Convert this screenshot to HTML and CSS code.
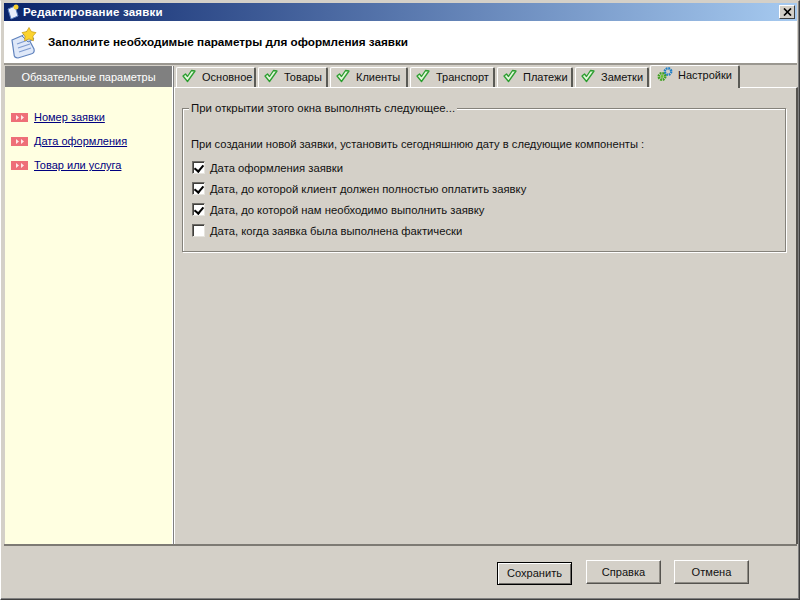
FILE: index.html
```html
<!DOCTYPE html>
<html lang="ru">
<head>
<meta charset="utf-8">
<title>Редактирование заявки</title>
<link rel="stylesheet" href="styles.css">
</head>
<body>
<svg class="defs" width="0" height="0">
  <defs>
    <symbol id="check" viewBox="0 0 14 14">
      <path d="M1 7 L5.500 12.500 L13 2 L9.500 1.500 L5.500 7.500 L3.500 5 Z" fill="#e4f8dc" stroke="#2c9e30" stroke-width="1.300" stroke-linejoin="round"/>
    </symbol>
    <symbol id="arrows" viewBox="0 0 17 9">
      <rect width="17" height="9" fill="#ee6f78"/>
      <path d="M5 2 L8 4.500 L5 7 Z M10 2 L13 4.500 L10 7 Z" fill="#ffe8e8"/>
    </symbol>
  </defs>
</svg>
<div class="window">
  <div class="titlebar">
    <svg class="title-icon" viewBox="0 0 14 16" width="14" height="16">
      <path d="M2 5 L9 2 L12 12 L5 15 Z" fill="#e8eefa" stroke="#5b7fc0"/>
      <circle cx="10" cy="3" r="2.5" fill="#f8d030"/>
    </svg>
    <span class="title-text">Редактирование заявки</span>
    <span class="close-btn">
      <svg viewBox="0 0 9 8" width="9" height="8"><path d="M1 0.5 L8 7.5 M8 0.5 L1 7.5" stroke="#000" stroke-width="1.7"/></svg>
    </span>
  </div>
  <div class="header">
    <svg class="header-icon" viewBox="0 0 30 32" width="30" height="32">
      <path d="M4 13 L18 7 L26 22 Q27 26 23 27 L10 31 Q6 31 6 27 Z" fill="#dfe8f8" stroke="#5f82bd" stroke-width="1.2"/>
      <path d="M9 17 L20 13 M10 21 L22 17 M11 25 L23 21" stroke="#7d9ad0" stroke-width="1.2"/>
      <path d="M14 9 L19 4 L26 12 L20 15 Z" fill="#c4d4ee" stroke="#5f82bd"/>
      <path d="M21 0.5 L23.4 4.6 L28 5.6 L24.9 9.1 L25.4 13.8 L21 11.9 L16.6 13.8 L17.1 9.1 L14 5.6 L18.6 4.6 Z" fill="#fbd32f" stroke="#c89a10" stroke-width=".7"/>
    </svg>
    <span class="header-text">Заполните необходимые параметры для оформления заявки</span>
  </div>
  <div class="main">
    <aside class="side">
      <div class="side-title">Обязательные параметры</div>
      <ul class="side-list">
        <li><svg class="arrows" width="17" height="9"><use href="#arrows"/></svg><a href="#">Номер заявки</a></li>
        <li><svg class="arrows" width="17" height="9"><use href="#arrows"/></svg><a href="#">Дата оформления</a></li>
        <li><svg class="arrows" width="17" height="9"><use href="#arrows"/></svg><a href="#">Товар или услуга</a></li>
      </ul>
    </aside>
    <section class="content">
      <div class="tabs">
        <div class="tab t1"><svg class="check" width="14" height="14"><use href="#check"/></svg>Основное</div>
        <div class="tab t2"><svg class="check" width="14" height="14"><use href="#check"/></svg>Товары</div>
        <div class="tab t3"><svg class="check" width="14" height="14"><use href="#check"/></svg>Клиенты</div>
        <div class="tab t4"><svg class="check" width="14" height="14"><use href="#check"/></svg>Транспорт</div>
        <div class="tab t5"><svg class="check" width="14" height="14"><use href="#check"/></svg>Платежи</div>
        <div class="tab t6"><svg class="check" width="14" height="14"><use href="#check"/></svg>Заметки</div>
        <div class="tab active">
          <svg class="gears" viewBox="0 0 16 15" width="16" height="15">
            <circle cx="11" cy="4.500" r="3.200" fill="none" stroke="#1f7fc8" stroke-width="2.400" stroke-dasharray="1.700 .8"/>
            <circle cx="5" cy="9.500" r="3.200" fill="none" stroke="#3fa020" stroke-width="2.600" stroke-dasharray="1.700 .8"/>
            <circle cx="5" cy="9.500" r="1.400" fill="#66c22e"/>
          </svg>Настройки
        </div>
      </div>
      <div class="pane">
        <div class="group">
          <div class="legend">При открытии этого окна выполнять следующее...</div>
          <p class="group-text">При создании новой заявки, установить сегодняшнюю дату в следующие компоненты :</p>
          <div class="option"><span class="box on"></span>Дата оформления заявки</div>
          <div class="option"><span class="box on"></span>Дата, до которой клиент должен полностью оплатить заявку</div>
          <div class="option"><span class="box on"></span>Дата, до которой нам необходимо выполнить заявку</div>
          <div class="option"><span class="box"></span>Дата, когда заявка была выполнена фактически</div>
        </div>
      </div>
    </section>
  </div>
  <div class="footer">
    <button class="btn default">Сохранить</button>
    <button class="btn">Справка</button>
    <button class="btn">Отмена</button>
  </div>
</div>
</body>
</html>
```
FILE: styles.css
```css
* { box-sizing: border-box; }
html, body { margin: 0; padding: 0; }
body {
  width: 800px;
  height: 600px;
  overflow: hidden;
  font-family: "Liberation Sans", Arial, sans-serif;
  font-size: 11px;
  color: #111;
  background: #d4d0c8;
}
.defs { position: absolute; }
.window {
  width: 800px;
  height: 600px;
  display: flex;
  flex-direction: column;
  padding: 3px 2px 3px 3px;
  background: #d4d0c8;
  border-top: 1px solid #d4d0c8;
  border-left: 1px solid #fff;
  border-right: 1px solid #404040;
  border-bottom: 1px solid #404040;
  box-shadow: inset 0 -1px 0 #808080, inset -1px 0 0 #808080;
}
.titlebar {
  height: 18px;
  margin-top: -1px;
  flex: none;
  display: flex;
  align-items: center;
  padding: 0 2px;
  background: linear-gradient(90deg, #0a246a, #a6caf0);
  color: #fff;
  font-weight: bold;
  font-size: 11.500px;
}
.title-icon { margin-right: 3px; flex: none; }
.title-text { flex: 1; letter-spacing: .2px; }
.close-btn {
  width: 16px;
  height: 14px;
  display: flex;
  align-items: center;
  justify-content: center;
  background: #d4d0c8;
  border: 1px solid;
  border-color: #fff #404040 #404040 #fff;
}
.header {
  height: 42px;
  flex: none;
  display: flex;
  align-items: center;
  background: #fff;
  padding-left: 4px;
  border-bottom: 1px solid #fff;
}
.header-icon { margin-right: 10px; flex: none; margin-top: 2px; }
.header-text { font-weight: bold; color: #000; font-size: 11.730px; }
.main {
  height: 483px;
  flex: none;
  display: flex;
  border-top: 2px solid #9a9790;
  border-bottom: 2px solid #7d7a74;
  box-shadow: 0 1px 0 #e8e6e0;
}
.side {
  width: 168px;
  flex: none;
  margin-left: 1px;
  margin-top: 1px;
  background: #ffffe1;
  border-right: 1px solid #fff;
  box-shadow: 1px 0 0 #808080;
  display: flex;
  flex-direction: column;
}
.side-title {
  height: 21px;
  flex: none;
  display: flex;
  align-items: center;
  justify-content: center;
  background: #808080;
  color: #fff;
  font-size: 11px;
}
.side-list {
  list-style: none;
  margin: 0;
  padding: 18px 0 0 6px;
}
.side-list li {
  height: 24px;
  display: flex;
  align-items: center;
}
.arrows { margin-right: 6px; flex: none; }
.side-list a { color: #000080; text-decoration: underline; }
.content {
  flex: 1;
  margin-left: 1px;
  display: flex;
  flex-direction: column;
  min-width: 0;
}
.tabs {
  height: 22px;
  flex: none;
  display: flex;
  align-items: flex-end;
  padding-left: 2px;
  position: relative;
}
.tab {
  height: 20px;
  display: flex;
  align-items: center;
  padding: 0 0 2px 5px;
  margin-right: 2px;
  border-top: 1px solid #fff;
  border-left: 1px solid #fff;
  border-right: 2px solid #5a5a55;
  border-radius: 2px 2px 0 0;
  font-size: 11px;
}
.t1 { width: 80px; }
.t2 { width: 70px; }
.t3 { width: 78px; }
.t4 { width: 85px; }
.t5 { width: 76px; }
.t6 { width: 74px; margin-right: 1px; }
.check { margin-right: 6px; margin-top: -2px; flex: none; }
.active {
  width: 90px;
  height: 23px;
  margin-right: 0;
  margin-bottom: -1px;
  padding: 0 0 5px 6px;
  background: #d4d0c8;
  position: relative;
  z-index: 1;
}
.gears { margin-right: 5px; flex: none; }
.pane {
  flex: 1;
  margin-right: -1px;
  background: #d4d0c8;
  border-top: 1px solid #fff;
  border-left: 1px solid #fff;
  border-right: 2px solid #55534f;
  padding: 20px 10px 0 7px;
}
.group {
  position: relative;
  height: 144px;
  padding: 28px 0 0 8px;
  border: 1px solid #85827b;
  box-shadow: 1px 1px 0 #fff, inset 1px 1px 0 #fff;
}
.legend {
  position: absolute;
  top: -7px;
  left: 6px;
  padding: 0 2px;
  background: #d4d0c8;
  font-size: 11.400px;
}
.group-text { margin: 0 0 6px; font-size: 11.180px; line-height: 14px; }
.option {
  height: 21px;
  margin-left: 1px;
  display: flex;
  align-items: center;
  font-size: 11.250px;
}
.box {
  width: 13px;
  height: 13px;
  margin-right: 5px;
  flex: none;
  position: relative;
  background: #fff;
  border: 1px solid;
  border-color: #6f6d68 #e6e4de #e6e4de #6f6d68;
  box-shadow: inset 1px 1px 0 #403f3c;
}
.box.on::after {
  content: "";
  position: absolute;
  left: 3px;
  top: 1px;
  width: 4px;
  height: 7px;
  border: solid #000;
  border-width: 0 2px 2px 0;
  transform: rotate(40deg);
}
.footer {
  flex: 1;
  display: flex;
  justify-content: flex-end;
  align-items: center;
  gap: 14px;
  padding: 2px 48px 0 0;
  background: #d4d0c8;
}
.btn {
  width: 75px;
  height: 24px;
  padding: 0;
  font: 11.100px "Liberation Sans", Arial, sans-serif;
  color: #111;
  background: #d4d0c8;
  border: 1px solid;
  border-color: #fff #55534f #55534f #fff;
  box-shadow: inset -1px -1px 0 #8f8c85;
}
.btn + .btn + .btn { margin-left: -1px; }
.btn.default {
  margin-top: 2px;
  height: 23px;
  border: 1px solid #000;
  box-shadow: inset 1px 1px 0 #fff, inset -1px -1px 0 #6f6d68;
}
```
